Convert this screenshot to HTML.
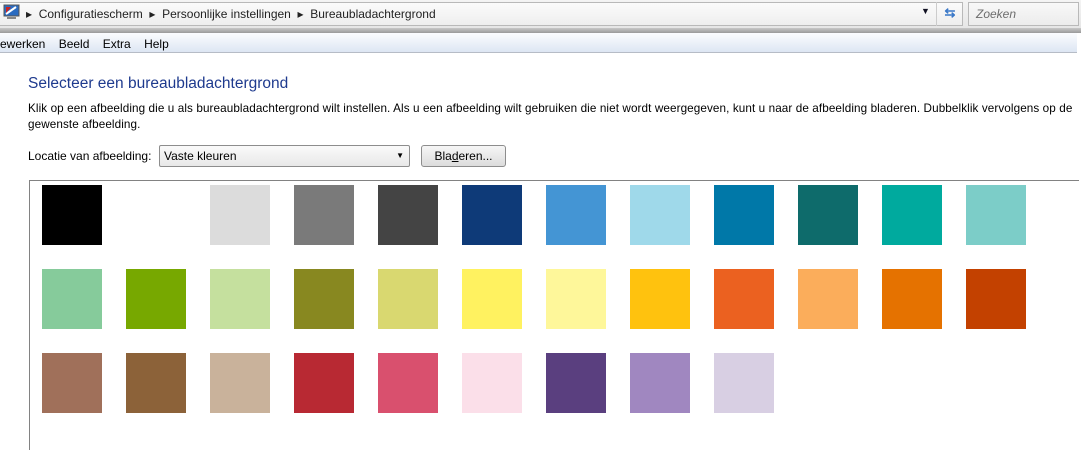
<!DOCTYPE html>
<html><head><style>
*{margin:0;padding:0;box-sizing:border-box}
body{width:1081px;height:442px;overflow:hidden;background:#fff;font-family:"Liberation Sans",sans-serif;font-size:12px;color:#000;position:relative}
.a{position:absolute}
.sw{position:absolute;width:60px;height:60px}
</style></head><body>
<div class="a" style="left:0;top:0;width:1081px;height:28px;background:linear-gradient(#f4f4f4,#e6e6e6)"></div>
<div class="a" style="left:0;top:2px;width:963px;height:24px;border:1px solid #b9b9b9;border-left:none;background:linear-gradient(#fbfbfb,#eeeeee)"></div>
<svg class="a" style="left:3px;top:4px" width="18" height="18" viewBox="0 0 18 18"><rect x="1" y="1" width="15" height="11" fill="#2a6bc0" stroke="#555"/><path d="M3 10 L13 3" stroke="#fff" stroke-width="2"/><path d="M3 3 L8 3 L3 9Z" fill="#c22"/><rect x="4" y="13" width="9" height="2" fill="#888"/></svg>
<div class="a" style="left:26px;top:7px;font-size:12px;color:#222;white-space:nowrap">▸&nbsp; Configuratiescherm &nbsp;▸&nbsp; Persoonlijke instellingen &nbsp;▸&nbsp; Bureaubladachtergrond</div>
<div class="a" style="left:921px;top:6px;font-size:9px;color:#112">▼</div>
<div class="a" style="left:936px;top:2px;width:27px;height:24px;border-left:1px solid #ccc;color:#3a78c8;font-size:13px;text-align:center;line-height:22px;font-weight:bold">⇆</div>
<div class="a" style="left:968px;top:2px;width:111px;height:24px;border:1px solid #b9b9b9;background:linear-gradient(#f8f8f8,#ececec);color:#6d6d6d;font-style:italic;padding:4px 7px">Zoeken</div>
<div class="a" style="left:0;top:28px;width:1081px;height:5px;background:linear-gradient(#c8c8c8,#9a9a9a)"></div>
<div class="a" style="left:0;top:33px;width:1077px;height:20px;background:linear-gradient(#fbfcfe,#dde6f3);border-bottom:1px solid #b6bcc6"></div>
<div class="a" style="left:0;top:37px;white-space:nowrap">ewerken&nbsp;&nbsp;&nbsp; Beeld&nbsp;&nbsp;&nbsp; Extra&nbsp;&nbsp;&nbsp; Help</div>
<div class="a" style="left:28px;top:75px;font-size:15.5px;color:#1e3a8e">Selecteer een bureaubladachtergrond</div>
<div class="a" style="left:28px;top:101px;width:1060px;line-height:16px;white-space:nowrap;font-size:11.7px;letter-spacing:0.1px">Klik op een afbeelding die u als bureaubladachtergrond wilt instellen. Als u een afbeelding wilt gebruiken die niet wordt weergegeven, kunt u naar de afbeelding bladeren. Dubbelklik vervolgens op de<br>gewenste afbeelding.</div>
<div class="a" style="left:28px;top:149px">Locatie van afbeelding:</div>
<div class="a" style="left:159px;top:145px;width:251px;height:22px;border:1px solid #8d8d8d;border-radius:2px;background:linear-gradient(#fafafa,#e8e8e8);padding:3px 4px">Vaste kleuren<span style="position:absolute;right:5px;top:5px;font-size:8px">▼</span></div>
<div class="a" style="left:421px;top:145px;width:85px;height:22px;border:1px solid #8d8d8d;border-radius:3px;background:linear-gradient(#f6f6f6,#dcdcdc);text-align:center;line-height:20px">Bla<u>d</u>eren...</div>
<div class="a" style="left:29px;top:180px;width:1050px;height:270px;border-top:1px solid #828282;border-left:1px solid #828282"></div>
<div id="g"></div>
<script>
var c=[["#000000",null,"#dcdcdc","#7a7a7a","#444444","#0e3a78","#4495d4","#9fd9ea","#0078a8","#0e6b6b","#00aa9e","#7ccdc8"],
["#86cb9b","#77a800","#c5e09e","#888820","#d9d870","#fff260","#fef79a","#ffc20e","#eb6120","#fbad5b","#e57200","#c34100"],
["#a0705a","#8c6239","#c9b29b","#b82933","#d9506e","#fbdfe9","#5a3f7f","#a087c0","#d8cfe3"]];
var h="";c.forEach(function(r,j){r.forEach(function(col,i){if(col)h+='<div class="sw" style="left:'+(42+84*i)+'px;top:'+(185+84*j)+'px;background:'+col+'"></div>';});});
document.getElementById("g").innerHTML=h;
</script>
</body></html>
